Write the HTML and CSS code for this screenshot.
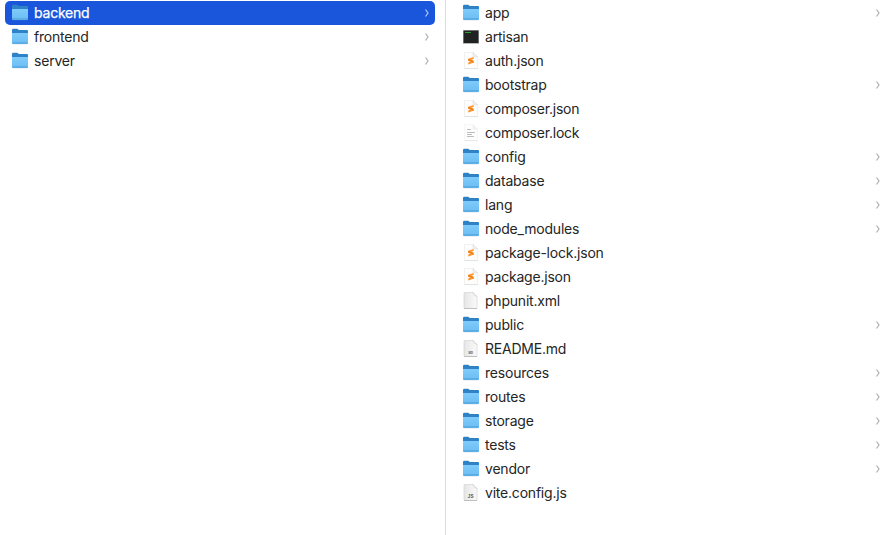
FILE: index.html
```
<!DOCTYPE html>
<html lang="en">
<head>
<meta charset="utf-8">
<title>Files</title>
<link rel="stylesheet" href="styles.css">
</head>
<body>
<svg class="defs" width="0" height="0">
  <defs>
    <linearGradient id="front" x1="0" y1="0" x2="0" y2="1"><stop offset="0" stop-color="#7fcbfa"/><stop offset="1" stop-color="#6cbdf3"/></linearGradient>
    <linearGradient id="gray" x1="0" y1="0" x2="1" y2="0"><stop offset="0" stop-color="#e6e6e6"/><stop offset="1" stop-color="#fafafa"/></linearGradient>
    <symbol id="folder" viewBox="0 0 18 18">
      <path d="M1 2q0-1.300 1.300-1.300h3.700q.7 0 1.300.7l.4.600H16q1 0 1 1V8H1z" fill="#2e83c8"/>
      <path d="M1 4.900h16V15q0 1-1 1H2q-1 0-1-1z" fill="url(#front)"/>
      <path d="M1 14.500h16" stroke="#5badE6" stroke-width="1"/>
      <path d="M1.500 15.700h15" stroke="#4f9dd4" stroke-width=".6"/>
    </symbol>
    <symbol id="terminal" viewBox="0 0 18 18">
      <rect x="1" y="2" width="16" height="14" rx=".5" fill="#b9b9b9"/>
      <rect x="1.500" y="2.500" width="15" height="12.500" fill="#202221"/>
      <path d="M3 4.500h6" stroke="#2c9c35" stroke-width="1"/>
    </symbol>
    <symbol id="json" viewBox="0 0 18 18">
      <path d="M2.500.5h8.700l4.300 4.300v11.700h-13z" fill="#fdfdfd" stroke="#ebebeb" stroke-width=".7"/>
      <path d="M11.200.5v4.300h4.300z" fill="#f3f3f3" stroke="#d8d8d8" stroke-width=".6"/>
      <path d="M2.500 16.600h13" stroke="#d4d4d4" stroke-width=".6"/>
      <path d="M11.600 5 6.200 6.700v2l3 .9-3 .9v2l5.400-1.700v-2l-3-.9 3-.9z" fill="#fa962f"/>
      <path d="m6.200 6.700 5.400 2.100v2L6.200 8.700z" fill="#ed8122"/>
    </symbol>
    <symbol id="text" viewBox="0 0 18 18">
      <path d="M2.500.5h8.700l4.300 4.300v11.700h-13z" fill="#fdfdfd" stroke="#f2f2f2" stroke-width=".6"/>
      <path d="M11.200.5v4.300h4.300" fill="#f3f3f3" stroke="#e2e2e2" stroke-width=".5"/>
      <path d="M2.500 16.600h13" stroke="#ddd" stroke-width=".6"/>
      <path d="M5 5.500h4M5 8.500h8M5 10.500h5M5 12.500h7" stroke="#bdbdbd" stroke-width="1"/>
    </symbol>
    <symbol id="blank" viewBox="0 0 18 18">
      <path d="M3 .5h8L15 4.500v11.500q0 .5-.5.500h-12q-.5 0-.5-.500V1q0-.5.500-.5z" fill="url(#gray)" stroke="#cfcfcf" stroke-width=".6"/>
      <path d="M10.800.5q.2 3.800 4.200 4z" fill="#fff" stroke="#c8c8c8" stroke-width=".5"/>
      <path d="M2 16.500h13" stroke="#aaa" stroke-width=".6"/>
    </symbol>
  </defs>
</svg>
<main class="browser">
  <ul class="column parents" id="parents"></ul>
  <ul class="column children" id="children"></ul>
</main>
<script src="files.js"></script>
</body>
</html>
```
FILE: styles.css
```
* { box-sizing: border-box; }
body {
  margin: 0;
  background: #fff;
  color: #252525;
  font: 14px/24px Inter, "Liberation Sans", sans-serif;
  letter-spacing: -.21px;
}
.defs { display: block; height: 0; }
.browser { display: flex; height: 535px; overflow: hidden; }
.column { margin: 0; padding: 1px 10px 0 5px; list-style: none; }
.parents { width: 446px; border-right: 1px solid #dcdcdc; }
.children { flex: 1; padding: 1px 9px 0 10px; }
.row {
  display: flex;
  align-items: center;
  height: 24px;
  padding: 0 5px 0 6px;
  border-radius: 5px;
}
.row.selected { background: #1a56db; color: #fff; }
.selected .name { -webkit-text-stroke: .25px #fff; }
.icon { width: 18px; height: 18px; flex: none; margin-right: 5px; }
.name { flex: 1; white-space: nowrap; }
.chevron { width: 6px; height: 8px; flex: none; fill: none; stroke: #b0b0b0; stroke-width: 1.2; }
.selected .chevron { stroke: #b4c8f5; }
.badge { font: 700 4.6px "Liberation Sans", sans-serif; letter-spacing: .3px; fill: #555; }
.badge.small { font-size: 2.8px; letter-spacing: 0; }
```
FILE: files.js
```
const parents = [["backend", "folder"], ["frontend", "folder"], ["server", "folder"]];
const children = [
  ["app", "folder"], ["artisan", "terminal"], ["auth.json", "json"], ["bootstrap", "folder"],
  ["composer.json", "json"], ["composer.lock", "text"], ["config", "folder"], ["database", "folder"],
  ["lang", "folder"], ["node_modules", "folder"], ["package-lock.json", "json"], ["package.json", "json"],
  ["phpunit.xml", "blank"], ["public", "folder"], ["README.md", "blank", "MD"], ["resources", "folder"],
  ["routes", "folder"], ["storage", "folder"], ["tests", "folder"], ["vendor", "folder"],
  ["vite.config.js", "blank", "JS"]
];
function row([name, icon, badge], selected) {
  const mark = badge ? `<text class="badge ${badge === "MD" ? "small" : ""}" x="8.800" y="14" text-anchor="middle">${badge}</text>` : "";
  const chevron = icon === "folder" ? '<svg class="chevron" viewBox="0 0 6 8"><path d="M1.500 .5 4 4 1.500 7.500"/></svg>' : "";
  return `<li class="row ${selected ? "selected" : ""}"><svg class="icon" viewBox="0 0 18 18"><use href="#${icon}"/>${mark}</svg><span class="name">${name}</span>${chevron}</li>`;
}
document.getElementById("parents").innerHTML = parents.map((item, i) => row(item, i === 0)).join("");
document.getElementById("children").innerHTML = children.map(item => row(item, false)).join("");
```
